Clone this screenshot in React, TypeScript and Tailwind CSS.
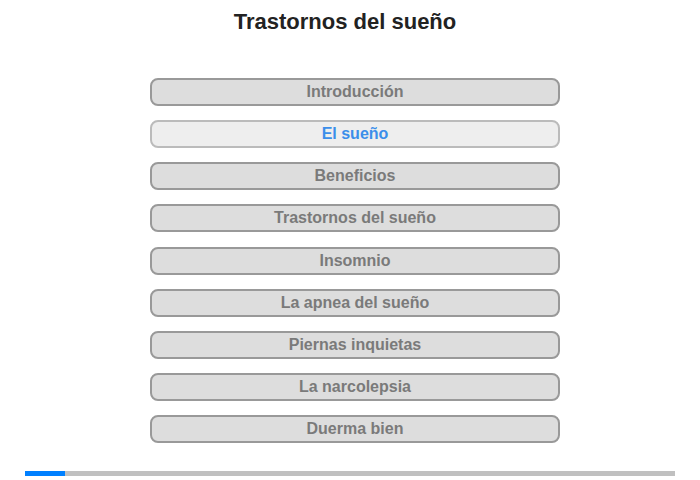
const sections = [
    "Introducción",
    "El sueño",
    "Beneficios",
    "Trastornos del sueño",
    "Insomnio",
    "La apnea del sueño",
    "Piernas inquietas",
    "La narcolepsia",
    "Duerma bien",
];

export default function App() {
    const active = 1;

    return (
        <div className="w-[700px] h-[480px] bg-white flex flex-col items-center font-['Liberation_Sans',Arial,sans-serif]">
            <h1 className="mt-[9px] mr-[10px] text-[22px] leading-[26px] font-bold text-[#222]">
                Trastornos del sueño
            </h1>

            <div className="mt-[43px] ml-[10px] flex flex-col gap-[14.16px]">
                {sections.map((s, i) =>
                    i === active ? (
                        <div
                            key={s}
                            className="w-[410px] h-[28px] rounded-[8px] border-2 border-[#bbb] bg-[#eee] flex items-center justify-center text-[16px] font-bold text-[#3b8eea]"
                        >
                            {s}
                        </div>
                    ) : (
                        <div
                            key={s}
                            className="w-[410px] h-[28px] rounded-[8px] border-2 border-[#999] bg-[#ddd] flex items-center justify-center text-[16px] font-bold text-[#7a7a7a]"
                        >
                            {s}
                        </div>
                    )
                )}
            </div>

            {/* progress */}
            <div className="mt-[27.7px] w-[650px] h-[5px] bg-[#c0c0c0] flex">
                <div className="w-[40px] h-full bg-[#0080ff]" />
            </div>
        </div>
    );
}
